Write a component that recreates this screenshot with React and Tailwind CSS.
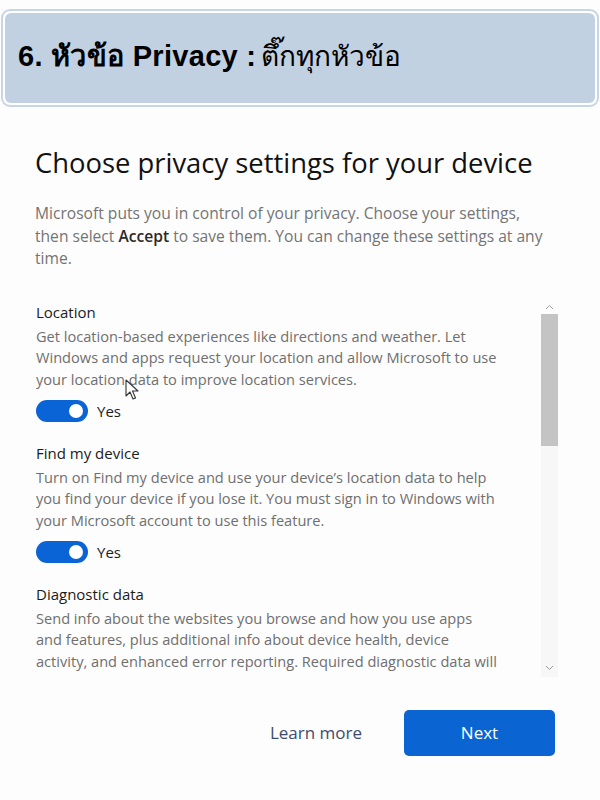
import React from 'react';

function Toggle() {
    return (
        <div className="flex items-center gap-[9px]">
            <div className="w-[52px] h-[22px] rounded-full bg-[#0b64d6] flex items-center justify-end pr-[5px]">
                <div className="w-[14px] h-[14px] rounded-full bg-white"></div>
            </div>
            <span className="text-[15px] text-[#1c1c1c]">Yes</span>
        </div>
    );
}

function Setting({ title, lines, toggle }) {
    return (
        <div className="flex flex-col">
            <div className="text-[15px] leading-[22px] font-medium text-[#1b1b1b]">{title}</div>
            <p className="mt-[3px] text-[14.6px] leading-[21.5px] text-[#6f6f6f]">
                {lines.map((l, i) => (
                    <React.Fragment key={i}>
                        {l}
                        {i < lines.length - 1 && <br />}
                    </React.Fragment>
                ))}
            </p>
            {toggle && (
                <div className="mt-[10px] mb-[19px]">
                    <Toggle />
                </div>
            )}
        </div>
    );
}

export default function App() {
    return (
        <div className="w-[600px] h-[800px] bg-[#fdfdfd] relative overflow-hidden font-['Open_Sans','Noto_Sans',sans-serif]">
            {/* header banner */}
            <div className="pt-[9px] px-px">
                <div className="rounded-[9px] border-2 border-[#c7d5e7] bg-white p-[2px]">
                    <div className="rounded-[6px] bg-[#c2d1e2] h-[90px] flex items-center pl-[13px] pb-[3px] text-[29px] text-black font-['Liberation_Sans','Noto_Sans',sans-serif]">
                        <span className="font-bold tracking-[0.3px]">6. หัวข้อ Privacy :</span>
                        <span className="ml-[5px] text-[28px]">ตึ๊กทุกหัวข้อ</span>
                    </div>
                </div>
            </div>

            <div className="pl-[35px] pr-[30px]">
                <h1 className="mt-[39px] text-[27.4px] leading-[34px] text-[#111111]">
                    Choose privacy settings for your device
                </h1>
                <p className="mt-[22px] text-[15.6px] leading-[22.5px] text-[#747474]">
                    Microsoft puts you in control of your privacy. Choose your settings,<br />
                    then select <span className="font-semibold text-[#2a2a2a]">Accept</span> to save them. You can change these settings at any<br />
                    time.
                </p>
            </div>

            {/* scroll region */}
            <div className="mt-[31px] ml-[36px] mr-[42px] flex h-[376px]">
                <div className="flex-1 overflow-hidden">
                    <Setting
                        title="Location"
                        lines={[
                            'Get location-based experiences like directions and weather. Let',
                            'Windows and apps request your location and allow Microsoft to use',
                            'your location data to improve location services.',
                        ]}
                        toggle
                    />
                    <Setting
                        title="Find my device"
                        lines={[
                            'Turn on Find my device and use your device\u2019s location data to help',
                            'you find your device if you lose it. You must sign in to Windows with',
                            'your Microsoft account to use this feature.',
                        ]}
                        toggle
                    />
                    <Setting
                        title="Diagnostic data"
                        lines={[
                            'Send info about the websites you browse and how you use apps',
                            'and features, plus additional info about device health, device',
                            'activity, and enhanced error reporting. Required diagnostic data will',
                        ]}
                    />
                </div>
                <div className="w-[17px] flex flex-col bg-[#f7f7f7]">
                    <div className="h-[13px] bg-[#fdfdfd] flex items-center justify-center">
                        <svg width="9" height="6" viewBox="0 0 9 6" fill="none" stroke="#9a9a9a" strokeWidth="1">
                            <path d="M1 5l3.5-3.5L8 5" />
                        </svg>
                    </div>
                    <div className="h-[132px] bg-[#c4c4c4]"></div>
                    <div className="flex-1"></div>
                    <div className="h-[17px] flex items-center justify-center">
                        <svg width="9" height="6" viewBox="0 0 9 6" fill="none" stroke="#9a9a9a" strokeWidth="1">
                            <path d="M1 1l3.5 3.5L8 1" />
                        </svg>
                    </div>
                </div>
            </div>

            {/* footer buttons */}
            <div className="mt-[33px] flex items-center justify-end pr-[45px] gap-[42px]">
                <span className="text-[17px] text-[#3d4d6e]">Learn more</span>
                <div className="w-[151px] h-[46px] rounded-[5px] bg-[#0a64d2] flex items-center justify-center text-[17px] text-white">
                    Next
                </div>
            </div>

            {/* mouse pointer */}
            <svg className="absolute left-[125px] top-[379px]" width="14" height="22" viewBox="0 0 14 22">
                <path d="M1 1v16l4-4 3 7 2.5-1-3-7h5.5z" fill="#ffffff" stroke="#333333" strokeWidth="1.1" strokeLinejoin="round" />
            </svg>
        </div>
    );
}
